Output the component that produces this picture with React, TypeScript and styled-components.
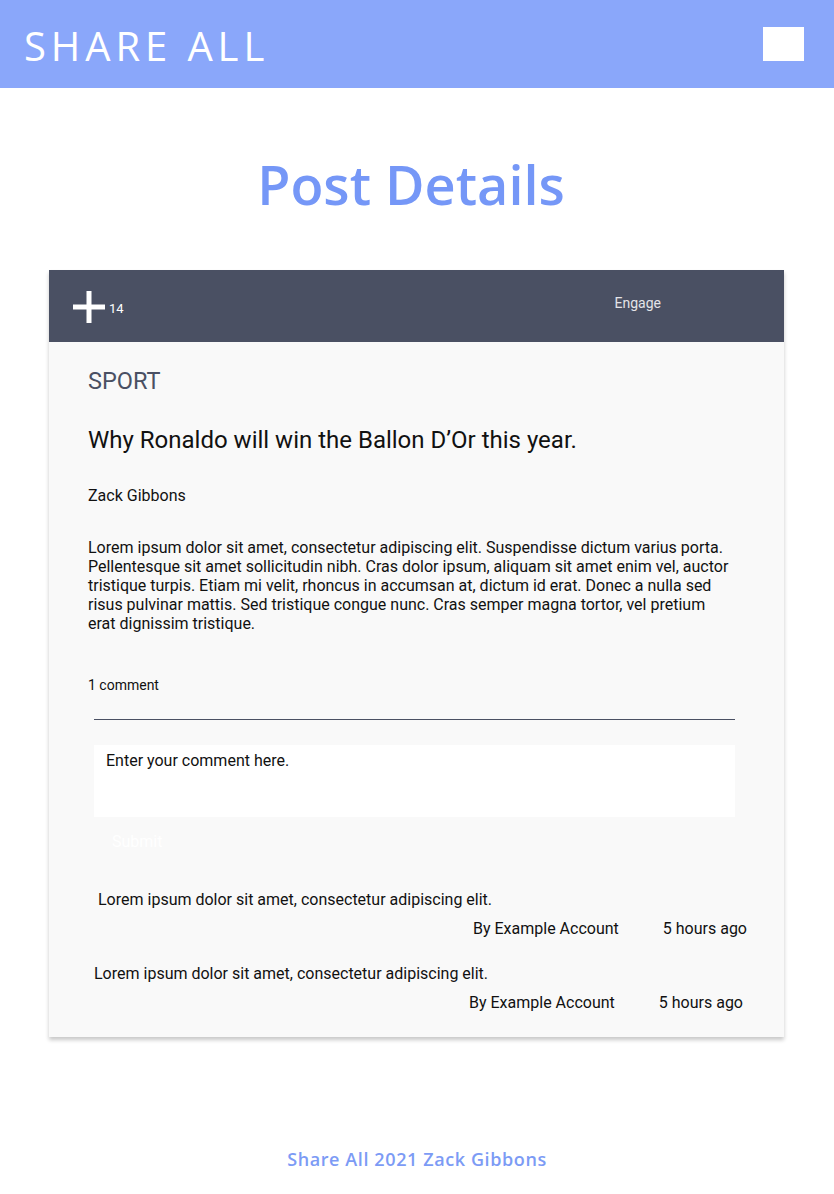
import React from "react";
import styled, { createGlobalStyle } from "styled-components";

const GlobalStyle = createGlobalStyle`
  html, body { margin: 0; padding: 0; background: #ffffff; }
  body { font-family: Roboto, "Liberation Sans", sans-serif; }
  * { box-sizing: border-box; }
`;

const Page = styled.div`
  width: 834px;
  min-height: 1194px;
  display: flex;
  flex-direction: column;
`;

const TopBar = styled.header`
  height: 88px;
  background: #8aa7fa;
  display: flex;
  align-items: flex-start;
  justify-content: space-between;
  padding: 0 30px 0 24px;
`;

const Brand = styled.div`
  margin-top: 26px;
  font-family: "Open Sans", "Liberation Sans", sans-serif;
  font-weight: 400;
  font-size: 40px;
  letter-spacing: 4.9px;
  color: #ffffff;
  line-height: 40px;
`;

const MenuBox = styled.div`
  margin-top: 27px;
  width: 41px;
  height: 34px;
  background: #ffffff;
`;

const PageTitle = styled.h1`
  margin: 66px 0 0;
  padding-right: 12px;
  text-align: center;
  font-family: "Open Sans", "Liberation Sans", sans-serif;
  font-weight: 600;
  font-size: 54px;
  line-height: 60px;
  color: #7597f7;
`;

const Card = styled.section`
  margin: 56px 0 0 49px;
  width: 735px;
  background: #f9f9f9;
  box-shadow: 0 3px 4px rgba(0, 0, 0, 0.22);
`;

const CardBar = styled.div`
  height: 72px;
  background: #4a5063;
  display: flex;
  align-items: center;
  padding: 0 0 0 24px;
`;

const Votes = styled.div`
  display: flex;
  align-items: center;
  gap: 4px;
  color: #ffffff;
  font-size: 13px;
  flex: 1;
  padding-top: 2px;
`;

const VoteCount = styled.span`
  margin-top: 3px;
`;

const EngageButton = styled.button`
  border: none;
  background: transparent;
  color: #e4e4e8;
  font-family: Roboto, "Liberation Sans", sans-serif;
  font-size: 14px;
  padding: 0;
  margin: -6px 123px 0 0;
  cursor: pointer;
`;

const CardBody = styled.div`
  padding: 25px 0 24px 39px;
  display: flex;
  flex-direction: column;
`;

const Category = styled.div`
  font-size: 23.5px;
  color: #4a5063;
  line-height: 28px;
`;

const PostTitle = styled.h2`
  margin: 31px 0 0;
  font-weight: 400;
  font-size: 24px;
  line-height: 28px;
  color: #111111;
`;

const Author = styled.div`
  margin-top: 32px;
  font-size: 16px;
  line-height: 20px;
  color: #111111;
`;

const Body = styled.p`
  margin: 32px 0 0;
  width: 645px;
  font-size: 16px;
  line-height: 19px;
  color: #111111;
`;

const CommentCount = styled.div`
  margin-top: 43px;
  font-size: 14px;
  line-height: 18px;
  color: #111111;
`;

const Divider = styled.hr`
  margin: 25px 0 0 6px;
  width: 641px;
  border: none;
  border-top: 1px solid #4a5063;
`;

const CommentInput = styled.textarea`
  margin: 25px 0 0 6px;
  width: 641px;
  height: 72px;
  border: none;
  background: #ffffff;
  resize: none;
  padding: 7px 12px;
  font-family: Roboto, "Liberation Sans", sans-serif;
  font-size: 16px;
  line-height: 18px;
  color: #111111;
  &::placeholder { color: #111111; }
`;

const SubmitButton = styled.button`
  align-self: flex-start;
  margin: 15px 0 0 24px;
  padding: 0;
  border: none;
  background: transparent;
  color: #ffffff;
  font-family: Roboto, "Liberation Sans", sans-serif;
  font-size: 16px;
  line-height: 20px;
`;

const CommentList = styled.div`
  margin-top: 38px;
  display: flex;
  flex-direction: column;
  gap: 25px;
`;

const Comment = styled.div<{ $shift: number }>`
  display: flex;
  flex-direction: column;
  padding-left: ${(p) => 10 - p.$shift}px;
  padding-right: ${(p) => 37 + p.$shift}px;
`;

const CommentText = styled.div`
  font-size: 16px;
  line-height: 20px;
  color: #111111;
`;

const CommentMeta = styled.div`
  margin-top: 9px;
  display: flex;
  justify-content: flex-end;
  gap: 44px;
  font-size: 16px;
  line-height: 20px;
  color: #111111;
`;

const Footer = styled.footer`
  margin-top: 110px;
  text-align: center;
  font-family: "Open Sans", "Liberation Sans", sans-serif;
  font-weight: 600;
  font-size: 18px;
  letter-spacing: 0.6px;
  color: #7c9bf5;
`;

const PlusIcon = () => (
  <svg width="32" height="32" viewBox="0 0 32 32" aria-hidden>
    <rect x="13.5" y="0" width="5" height="32" fill="#ffffff" />
    <rect x="0" y="13.5" width="32" height="5" fill="#ffffff" />
  </svg>
);

const comments = [
  { text: "Lorem ipsum dolor sit amet, consectetur adipiscing elit.", by: "By Example Account", when: "5 hours ago", shift: 0 },
  { text: "Lorem ipsum dolor sit amet, consectetur adipiscing elit.", by: "By Example Account", when: "5 hours ago", shift: 4 },
];

export default function App() {
  return (
    <Page>
      <GlobalStyle />
      <TopBar>
        <Brand>SHARE ALL</Brand>
        <MenuBox />
      </TopBar>
      <PageTitle>Post Details</PageTitle>
      <Card>
        <CardBar>
          <Votes>
            <PlusIcon />
            <VoteCount>14</VoteCount>
          </Votes>
          <EngageButton>Engage</EngageButton>
        </CardBar>
        <CardBody>
          <Category>SPORT</Category>
          <PostTitle>Why Ronaldo will win the Ballon D’Or this year.</PostTitle>
          <Author>Zack Gibbons</Author>
          <Body>
            Lorem ipsum dolor sit amet, consectetur adipiscing elit. Suspendisse dictum varius porta.
            Pellentesque sit amet sollicitudin nibh. Cras dolor ipsum, aliquam sit amet enim vel, auctor
            tristique turpis. Etiam mi velit, rhoncus in accumsan at, dictum id erat. Donec a nulla sed
            risus pulvinar mattis. Sed tristique congue nunc. Cras semper magna tortor, vel pretium erat
            dignissim tristique.
          </Body>
          <CommentCount>1 comment</CommentCount>
          <Divider />
          <CommentInput placeholder="Enter your comment here." />
          <SubmitButton>Submit</SubmitButton>
          <CommentList>
            {comments.map((c, i) => (
              <Comment key={i} $shift={c.shift}>
                <CommentText>{c.text}</CommentText>
                <CommentMeta>
                  <span>{c.by}</span>
                  <span>{c.when}</span>
                </CommentMeta>
              </Comment>
            ))}
          </CommentList>
        </CardBody>
      </Card>
      <Footer>Share All 2021 Zack Gibbons</Footer>
    </Page>
  );
}
